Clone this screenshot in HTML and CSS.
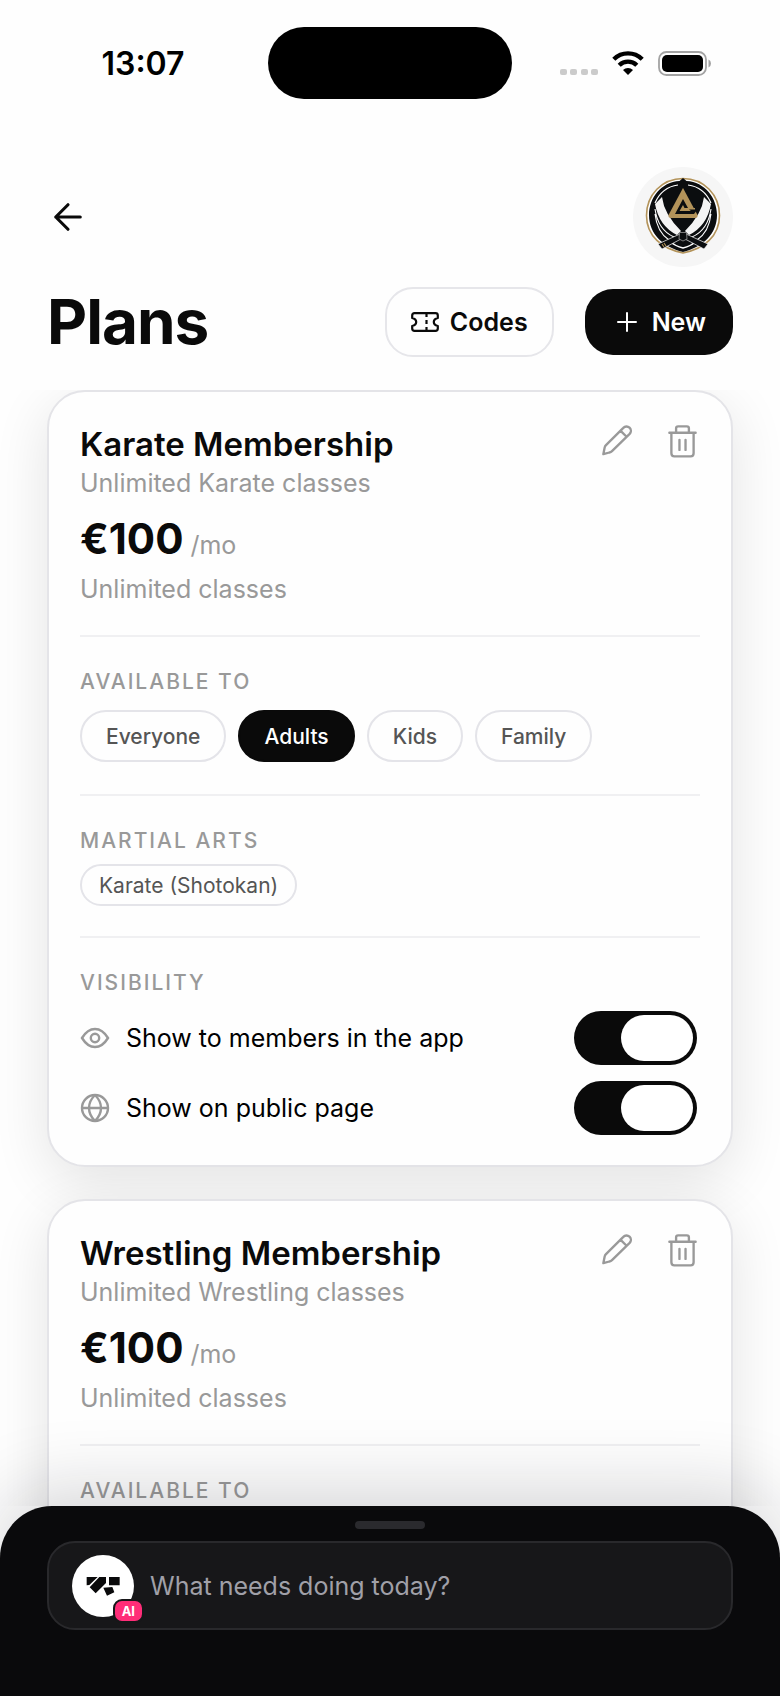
FILE: index.html
```html
<!DOCTYPE html>
<html lang="en">
  <head>
    <meta charset="UTF-8" />
    <meta name="viewport" content="width=device-width, initial-scale=1.0" />
    <title>Plans</title>
    <link rel="stylesheet" href="styles.css">
  </head>
  <body>
    <!-- Shared icons -->
    <svg class="sprite" aria-hidden="true">
      <symbol id="pencil" viewBox="0 0 90 92">
        <path d="M4 87 8 67Q9 63 12 60L64 8A13 13 0 0 1 83 26L30 78Q27 81 22 82ZM56 17 73 34" />
      </symbol>
      <symbol id="trash" viewBox="0 0 86 98">
        <path d="M4 23H82M24 23V10Q24 4 30 4H56Q62 4 62 10V23M10 23V84Q10 93 19 93H67Q76 93 76 84V23M34 44V74M52 44V74" />
      </symbol>
    </svg>

    <div class="status-bar">
      <span class="time">13:07</span>
      <div class="island"></div>
      <div class="status-icons">
        <svg width="38" height="25" viewBox="0 0 38 25" fill="#cbcbcb">
          <rect x="0" y="18" width="7" height="6" rx="2" />
          <rect x="10" y="18" width="7" height="6" rx="2" />
          <rect x="21" y="18" width="7" height="6" rx="2" />
          <rect x="31" y="18" width="7" height="6" rx="2" />
        </svg>
        <svg width="32" height="24" viewBox="0 0 32 24" fill="none" stroke="#000" stroke-width="4.4">
          <path d="M1.8 8.2a20.3 20.3 0 0 1 28.4 0" />
          <path d="M7.2 14.2a12.6 12.6 0 0 1 17.6 0" />
          <path d="M16 24l-5-5a7.2 7.2 0 0 1 10 0z" fill="#000" stroke="none" />
        </svg>
        <svg width="53" height="25" viewBox="0 0 53 25">
          <rect x="1" y="1" width="47" height="23" rx="7.5" fill="none" stroke="#a3a3a3" stroke-width="1.8" />
          <rect x="4" y="4" width="41" height="17" rx="5" />
          <path d="M50.5 8.5q2.5 1 2.5 4t-2.5 4z" fill="#a3a3a3" />
        </svg>
      </div>
    </div>

    <header>
      <div class="nav-row">
        <button class="back-button" aria-label="Back">
          <svg width="42" height="42" viewBox="0 0 24 24" fill="none" stroke="currentColor" stroke-width="1.8" stroke-linecap="round" stroke-linejoin="round">
            <path d="M19 12H5M12 19l-7-7 7-7" />
          </svg>
        </button>
        <svg class="club-logo" viewBox="0 0 100 100" role="img" aria-label="Club logo">
          <circle cx="50" cy="50" r="50" fill="#f6f6f6" />
          <path d="M50 11.500C71 11.500 86.500 28 86.500 48.500 86.500 69 71 82 50 86 29 82 13.500 69 13.500 48.500 13.500 28 29 11.500 50 11.500Z" fill="#fff" stroke="#b3935a" stroke-width="1.600" />
          <path d="M50 11 53.500 14C72 15 84 31 84 48 84 67 70 80 50 85 30 80 16 67 16 48 16 31 28 15 46.500 14Z" fill="#0b0d0f" />
          <path d="M45 18Q29 20 22 36M55 18Q71 20 78 36" fill="none" stroke="#fff" stroke-width="1.200" />
          <path d="M22 42Q25 63 41 70M78 42Q75 63 59 70M22 47Q24 65 36 73M78 47Q76 65 64 73" fill="none" stroke="#fff" stroke-width="1.100" />
          <path d="M22 37 29 30Q31 47 48 64L44 68Q26 59 22 37Z" fill="#f4f4f4" />
          <path d="M78 37 71 30Q69 47 52 64L56 68Q74 59 78 37Z" fill="#f4f4f4" />
          <path d="M38 75Q42 79 50 81 58 79 62 75" fill="none" stroke="#fff" stroke-width="1.500" />
          <path d="M50 21 64.500 48Q65 51 62 51H38Q35 51 35.500 48Z" fill="#b3935a" />
          <path d="M50 32 55 41H64V43L61 47H42Z" fill="#0b0d0f" />
          <path d="M50 38 51.500 41H62V42.500H56L58 44H46.500Z" fill="#b3935a" />
          <path d="M47 67 25 77 29 82 48 72ZM53 67 75 77 71 82 52 72Z" fill="#0b0d0f" stroke="#f6f6f6" stroke-width="0.700" />
          <path d="M46.500 65.500H53.500L54 72 50 74 46 72Z" fill="#0b0d0f" stroke="#aaa" stroke-width="0.700" />
          <path d="M29 77l2 3M31 76l2 3" stroke="#b3935a" stroke-width="1.200" />
        </svg>
      </div>
      <div class="title-row">
        <h1>Plans</h1>
        <button class="codes-button">
          <svg width="28" height="20" viewBox="0 0 28 20" fill="none" stroke="currentColor" stroke-width="2.2" stroke-linejoin="round">
            <path d="M3.500 1.200H24.500Q26.800 1.200 26.800 3.500V6Q22.800 7 22.800 10T26.800 14V16.500Q26.800 18.800 24.500 18.800H3.500Q1.200 18.800 1.200 16.500V14Q5.200 13 5.200 10T1.200 6V3.500Q1.200 1.200 3.500 1.200Z" />
            <path d="M15.500 2V5M15.500 8V12M15.500 15V18" />
          </svg>
          Codes
        </button>
        <button class="new-button">
          <svg width="20" height="20" viewBox="0 0 20 20" fill="none" stroke="currentColor" stroke-width="2" stroke-linecap="round">
            <path d="M10 1V19M1 10H19" />
          </svg>
          New
        </button>
      </div>
    </header>

    <main class="plan-list">
      <article class="card">
        <div class="summary">
          <div class="card-head">
            <h2>Karate Membership</h2>
            <button class="icon-button" aria-label="Edit plan">
              <svg width="30" height="31"><use href="#pencil" /></svg>
            </button>
            <button class="icon-button" aria-label="Delete plan">
              <svg width="29" height="33"><use href="#trash" /></svg>
            </button>
          </div>
          <p class="muted">Unlimited Karate classes</p>
          <p class="price">€100 <span class="muted">/mo</span></p>
          <p class="muted">Unlimited classes</p>
        </div>

        <section>
          <h3>Available to</h3>
          <div class="chips">
            <button class="chip">Everyone</button>
            <button class="chip selected">Adults</button>
            <button class="chip">Kids</button>
            <button class="chip">Family</button>
          </div>
        </section>

        <section class="arts">
          <h3>Martial arts</h3>
          <span class="tag">Karate (Shotokan)</span>
        </section>

        <section>
          <h3>Visibility</h3>
          <div class="toggles">
            <label class="toggle-row">
              <svg class="row-icon" viewBox="0 0 30 30">
                <path d="M2 15Q7.500 6 15 6T28 15Q22.500 24 15 24T2 15Z" />
                <circle cx="15" cy="15" r="4.200" />
              </svg>
              <span>Show to members in the app</span>
              <input type="checkbox" class="toggle" checked />
            </label>
            <label class="toggle-row">
              <svg class="row-icon" viewBox="0 0 30 30">
                <circle cx="15" cy="15" r="13" />
                <path d="M2 15H28M15 2C7 10 7 20 15 28M15 2C23 10 23 20 15 28" />
              </svg>
              <span>Show on public page</span>
              <input type="checkbox" class="toggle" checked />
            </label>
          </div>
        </section>
      </article>

      <article class="card">
        <div class="summary">
          <div class="card-head">
            <h2>Wrestling Membership</h2>
            <button class="icon-button" aria-label="Edit plan">
              <svg width="30" height="31"><use href="#pencil" /></svg>
            </button>
            <button class="icon-button" aria-label="Delete plan">
              <svg width="29" height="33"><use href="#trash" /></svg>
            </button>
          </div>
          <p class="muted">Unlimited Wrestling classes</p>
          <p class="price">€100 <span class="muted">/mo</span></p>
          <p class="muted">Unlimited classes</p>
        </div>

        <section>
          <h3>Available to</h3>
        </section>
      </article>
    </main>

    <footer>
      <div class="handle"></div>
      <div class="prompt">
        <div class="assistant">
          <svg width="62" height="62" viewBox="0 0 186 186">
            <circle cx="93" cy="93" r="93" fill="#fff" />
            <path d="M44 66H77L52 90 44 91ZM82 66H102V84L71 115 53 97ZM111 66H143V91H111ZM94 98 121 96 127 112 105 122Z" fill="#0a0a0b" />
          </svg>
          <span class="badge">AI</span>
        </div>
        <input type="text" placeholder="What needs doing today?" aria-label="Ask the assistant" />
      </div>
    </footer>
  </body>
</html>
```

FILE: styles.css
```css
* {
  box-sizing: border-box;
}
body {
  font-family: Inter, "Liberation Sans", sans-serif;
  font-size: 25px;
  color: #0a0a0a;
  background-color: #fefefe;
  display: flex;
  flex-direction: column;
  height: 100vh;
  margin: 0;
}
h1,
h2,
h3,
p {
  margin: 0;
}
button,
input {
  font-family: inherit;
  font-size: inherit;
  color: inherit;
  margin: 0;
}
button {
  background: none;
  border: none;
  padding: 0;
  cursor: pointer;
}
svg {
  display: block;
  flex-shrink: 0;
}
.sprite {
  display: none;
}

/* Status bar */
.status-bar {
  display: grid;
  grid-template-columns: 1fr 244px 1fr;
  align-items: center;
  height: 126px;
  color: #000;
}
.time {
  font-size: 32px;
  font-weight: 600;
  padding-left: 18px;
  text-align: center;
}
.island {
  height: 72px;
  border-radius: 36px;
  background-color: #000;
}
.status-icons {
  display: flex;
  align-items: center;
  justify-content: flex-end;
  gap: 14px;
  padding-right: 69px;
}

/* Header */
header {
  padding: 41px 47px 33px;
}
.nav-row,
.title-row {
  display: flex;
  align-items: center;
}
.nav-row {
  justify-content: space-between;
  margin-bottom: 20px;
}
.club-logo {
  width: 100px;
  height: 100px;
}
h1 {
  flex: 1;
  font-size: 62px;
  font-weight: 700;
  line-height: 70px;
  letter-spacing: -1px;
}
.codes-button,
.new-button {
  display: flex;
  align-items: center;
  justify-content: center;
  font-weight: 600;
  border-radius: 28px;
}
.codes-button {
  gap: 11px;
  height: 70px;
  padding: 0 24px;
  border: 2px solid #e6e6ea;
  margin-right: 31px;
}
.new-button {
  gap: 15px;
  height: 66px;
  padding: 0 27px 0 32px;
  background-color: #0a0a0a;
  color: #fff;
}

/* Plan list */
.plan-list {
  flex: 1;
  min-height: 0;
  overflow-y: auto;
  scrollbar-width: none;
  padding: 0 47px;
}
.card {
  background-color: #fefefe;
  border: 2px solid #e4e4e8;
  border-radius: 38px;
  padding: 30px 31px;
  margin-bottom: 32px;
  box-shadow: 0 14px 56px rgba(0, 0, 0, 0.11);
}
.summary {
  padding-bottom: 29px;
}
.card-head {
  display: flex;
  align-items: center;
  gap: 31px;
}
h2 {
  flex: 1;
  font-size: 33px;
  font-weight: 600;
  line-height: 44px;
}
.icon-button {
  display: flex;
  justify-content: center;
  width: 35px;
  height: 38px;
}
.icon-button svg {
  fill: none;
  stroke: #999;
  stroke-width: 7px;
  stroke-linecap: round;
  stroke-linejoin: round;
}
.muted {
  color: #999;
  font-size: 25px;
  font-weight: 400;
  line-height: 34px;
}
.price {
  font-size: 42px;
  font-weight: 700;
  line-height: 48px;
  margin: 15px 0 9px;
}
.price .muted {
  margin-left: -3px;
}
section {
  border-top: 2px solid #f0f0f2;
  padding: 31px 0 32px;
}
section:last-child {
  padding-bottom: 0;
}
h3 {
  color: #999;
  font-size: 21px;
  font-weight: 500;
  line-height: 28px;
  letter-spacing: 2px;
  text-transform: uppercase;
  margin-bottom: 14px;
}
.chips {
  display: flex;
  gap: 12px;
}
.chip,
.tag {
  border: 2px solid #e4e4e9;
  color: #555;
  font-size: 21px;
}
.chip {
  height: 52px;
  padding: 0 24px;
  border-radius: 26px;
  font-weight: 500;
}
.chip.selected {
  background-color: #0a0a0a;
  border-color: #0a0a0a;
  color: #fff;
}
.arts {
  padding-bottom: 30px;
}
.arts h3 {
  margin-bottom: 9px;
}
.tag {
  display: inline-flex;
  align-items: center;
  height: 42px;
  padding: 0 17px;
  border-radius: 21px;
  vertical-align: top;
}
.toggles {
  display: flex;
  flex-direction: column;
  gap: 16px;
}
.toggle-row {
  display: flex;
  align-items: center;
  gap: 16px;
  padding-right: 3px;
  color: #000;
}
.toggle-row span {
  flex: 1;
}
.row-icon {
  width: 30px;
  height: 30px;
  fill: none;
  stroke: #999;
  stroke-width: 2.4px;
}
.toggle {
  appearance: none;
  width: 123px;
  height: 54px;
  padding: 4px;
  border-radius: 27px;
  background-color: #ccc;
  display: flex;
}
.toggle::before {
  content: "";
  width: 72px;
  border-radius: 23px;
  background-color: #fff;
}
.toggle:checked {
  background-color: #0a0a0a;
  justify-content: flex-end;
}

/* Assistant dock */
footer {
  position: relative;
  background-color: #0a0a0c;
  border-radius: 52px 52px 0 0;
  padding: 15px 47px 66px;
  box-shadow: 0 -16px 72px rgba(16, 18, 32, 0.17);
}
.handle {
  width: 70px;
  height: 8px;
  border-radius: 4px;
  background-color: #2a2a2e;
  margin: 0 auto 12px;
}
.prompt {
  display: flex;
  align-items: center;
  gap: 16px;
  height: 89px;
  padding: 0 23px;
  background-color: #171719;
  border: 2px solid #29292c;
  border-radius: 28px;
}
.assistant {
  position: relative;
}
.badge {
  position: absolute;
  right: -10px;
  bottom: -6px;
  padding: 0 7px;
  border: 2px solid #171719;
  border-radius: 9px;
  background-color: #ff2d78;
  color: #fff;
  font-size: 13px;
  font-weight: 700;
  line-height: 20px;
}
.prompt input {
  flex: 1;
  min-width: 0;
  padding: 0;
  border: none;
  outline: none;
  background: none;
  color: #fff;
}
.prompt input::placeholder {
  color: #a0a0a8;
  opacity: 1;
}
```
